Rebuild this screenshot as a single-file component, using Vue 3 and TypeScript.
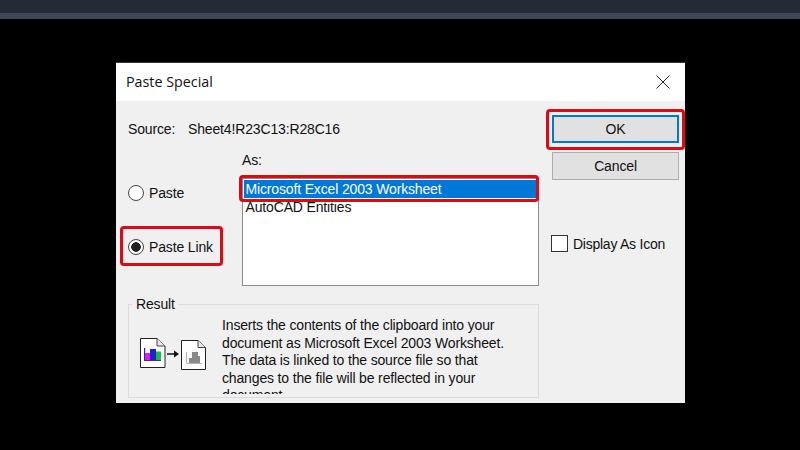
<template>
  <div class="screen">
    <div class="app-bar" />
    <div class="app-bar-strip" />

    <div class="dialog">
      <div class="title-bar">
        <span class="title">{{ title }}</span>
        <svg class="close" width="14" height="14" viewBox="0 0 14 14">
          <path d="M0.5 0.5 L13.5 13.5 M13.5 0.5 L0.5 13.5" stroke="#222" stroke-width="1" fill="none" />
        </svg>
      </div>

      <div class="body">
        <div class="main">
          <div class="source">
            <span class="source-label">Source:</span>
            <span>{{ source }}</span>
          </div>

          <div class="picker">
            <div class="radios">
              <label class="radio-row">
                <span class="radio" />
                <span>Paste</span>
              </label>
              <label class="radio-row radio-row--link">
                <span class="radio radio--on" />
                <span>Paste Link</span>
                <span class="mark mark--link" />
              </label>
            </div>

            <div class="as">
              <div class="as-label">As:</div>
              <div class="list">
                <div
                  v-for="(item, i) in items"
                  :key="item"
                  class="list-item"
                  :class="{ 'list-item--selected': i === 0 }"
                >
                  {{ item }}
                </div>
                <span class="mark mark--list" />
              </div>
            </div>
          </div>

          <fieldset class="result">
            <legend>Result</legend>
            <div class="result-icons">
              <svg width="69" height="33" viewBox="0 0 69 33">
                <path d="M1.5 0.5 H18 L26 8 V29.500 H1.5 Z" fill="#fff" stroke="#222" />
                <path d="M18 0.5 V8 H26" fill="#e8e8e8" stroke="#444" />
                <rect x="5" y="10" width="1.2" height="12" fill="#2222cc" />
                <rect x="6" y="15" width="5" height="7" fill="#e020d8" />
                <rect x="11" y="11" width="6" height="11" fill="#2020d0" />
                <rect x="17" y="13.500" width="5" height="8.500" fill="#10c040" />
                <rect x="5" y="22" width="17" height="1" fill="#4a2a90" />
                <path d="M28 16 H36" stroke="#111" stroke-width="1.500" />
                <path d="M35 12.500 L40 16 L35 19.500 Z" fill="#111" />
                <path d="M42.500 2.500 H59 L66.500 9.500 V31.500 H42.500 Z" fill="#fff" stroke="#222" />
                <path d="M59 2.500 V9.500 H66.500" fill="#e8e8e8" stroke="#444" />
                <path d="M50 25 V20 H53 V14 H59 V18 H61 V25 Z" fill="#8a8a8a" />
                <path d="M47.500 14 V25.500 H63" fill="none" stroke="#b4b4b4" />
              </svg>
            </div>
            <p class="result-text">{{ resultText }}</p>
          </fieldset>
        </div>

        <div class="side">
          <button class="btn btn--default" type="button">
            OK
            <span class="mark mark--ok" />
          </button>
          <button class="btn" type="button">Cancel</button>
          <label class="check-row">
            <span class="check" />
            <span>Display As Icon</span>
          </label>
        </div>
      </div>
    </div>
  </div>
</template>

<script setup lang="ts">
const title = 'Paste Special'
const source = 'Sheet4!R23C13:R28C16'
const items: string[] = ['Microsoft Excel 2003 Worksheet', 'AutoCAD Entities']
const resultText =
  'Inserts the contents of the clipboard into your document as Microsoft Excel 2003 Worksheet. The data is linked to the source file so that changes to the file will be reflected in your document.'
</script>

<style>
html,
body {
  background: #000;
}
</style>

<style scoped>
.screen {
  width: 800px;
  height: 450px;
  overflow: hidden;
  background: #000;
  display: flex;
  flex-direction: column;
  font-family: "Liberation Sans", Arial, sans-serif;
  font-size: 14px;
  letter-spacing: -0.15px;
  color: #111;
}
.app-bar {
  height: 13px;
  background: #232b35;
}
.app-bar-strip {
  height: 6px;
  background: #3d4757;
}

.dialog {
  width: 569px;
  height: 341px;
  margin: 43px 0 0 116px;
  background: #f0f0f0;
  border-top: 1px solid #333;
  box-sizing: border-box;
  overflow: hidden;
  display: flex;
  flex-direction: column;
}
.title-bar {
  height: 38px;
  flex: none;
  background: #fff;
  display: flex;
  align-items: center;
  justify-content: space-between;
  padding: 0 15px 1px 10px;
  box-sizing: border-box;
}
.title {
  font-family: "Open Sans", "Noto Sans", sans-serif;
  font-size: 14.3px;
  letter-spacing: 0;
}

.body {
  flex: 1;
  display: flex;
  padding-left: 12px;
}
.main {
  width: 411px;
  flex: none;
}
.source {
  display: flex;
  height: 17px;
  margin-top: 20px;
  line-height: 17px;
}
.source-label {
  width: 60px;
}

.picker {
  display: flex;
  margin-top: 14px;
}
.radios {
  width: 114px;
  flex: none;
  padding-top: 32px;
}
.radio-row {
  display: flex;
  align-items: center;
  gap: 5px;
  height: 18px;
  position: relative;
}
.radio-row--link {
  margin-top: 36px;
}
.radio {
  width: 16px;
  height: 16px;
  box-sizing: border-box;
  border: 1px solid #444;
  border-radius: 50%;
  background: #fff;
}
.radio--on {
  background: radial-gradient(circle, #222 0 4.5px, #fff 5px);
}

.as {
  width: 297px;
  flex: none;
}
.as-label {
  height: 17px;
  line-height: 17px;
  margin-bottom: 9px;
}
.list {
  position: relative;
  height: 108px;
  box-sizing: border-box;
  border: 1px solid #8c8c8c;
  background: #fff;
  padding: 1px;
}
.list-item {
  height: 18px;
  line-height: 18px;
  padding-left: 1.5px;
  white-space: nowrap;
}
.list-item--selected {
  background: #0078d7;
  color: #fff;
}

.result {
  margin: 11px 0 0;
  padding: 0;
  height: 101px;
  box-sizing: border-box;
  border: 1px solid #dcdcdc;
  display: flex;
  position: relative;
}
.result legend {
  margin-left: 3px;
  padding: 0 4px;
  line-height: 14px;
}
.result-icons {
  width: 93px;
  flex: none;
  padding: 27px 0 0 10px;
  box-sizing: border-box;
}
.result-text {
  margin: 6px 0 0;
  width: 292px;
  height: 77px;
  overflow: hidden;
  line-height: 17.500px;
}

.side {
  flex: 1;
  display: flex;
  flex-direction: column;
  align-items: flex-start;
  padding: 14px 0 0 13px;
}
.btn {
  position: relative;
  width: 127px;
  height: 28px;
  box-sizing: border-box;
  border: 1px solid #adadad;
  background: #e1e1e1;
  font: inherit;
  letter-spacing: inherit;
  color: inherit;
  padding: 0;
}
.btn + .btn {
  margin-top: 9px;
}
.btn--default {
  border: 2px solid #0078d7;
}
.check-row {
  display: flex;
  align-items: center;
  gap: 5px;
  margin: 55px 0 0 -1px;
  height: 17px;
  letter-spacing: -0.25px;
}
.check {
  width: 17px;
  height: 17px;
  box-sizing: border-box;
  border: 1px solid #333;
  background: #fff;
}

/* red highlights drawn over the controls */
.mark {
  position: absolute;
  box-sizing: border-box;
  border: 3px solid #dc0a14;
  border-radius: 4px;
  pointer-events: none;
}
.mark--link {
  left: -8px;
  top: -12px;
  width: 103px;
  height: 40px;
}
.mark--list {
  left: -4px;
  top: -4px;
  width: 300px;
  height: 27px;
}
.mark--ok {
  left: -8px;
  top: -8px;
  width: 139px;
  height: 41px;
}
</style>
